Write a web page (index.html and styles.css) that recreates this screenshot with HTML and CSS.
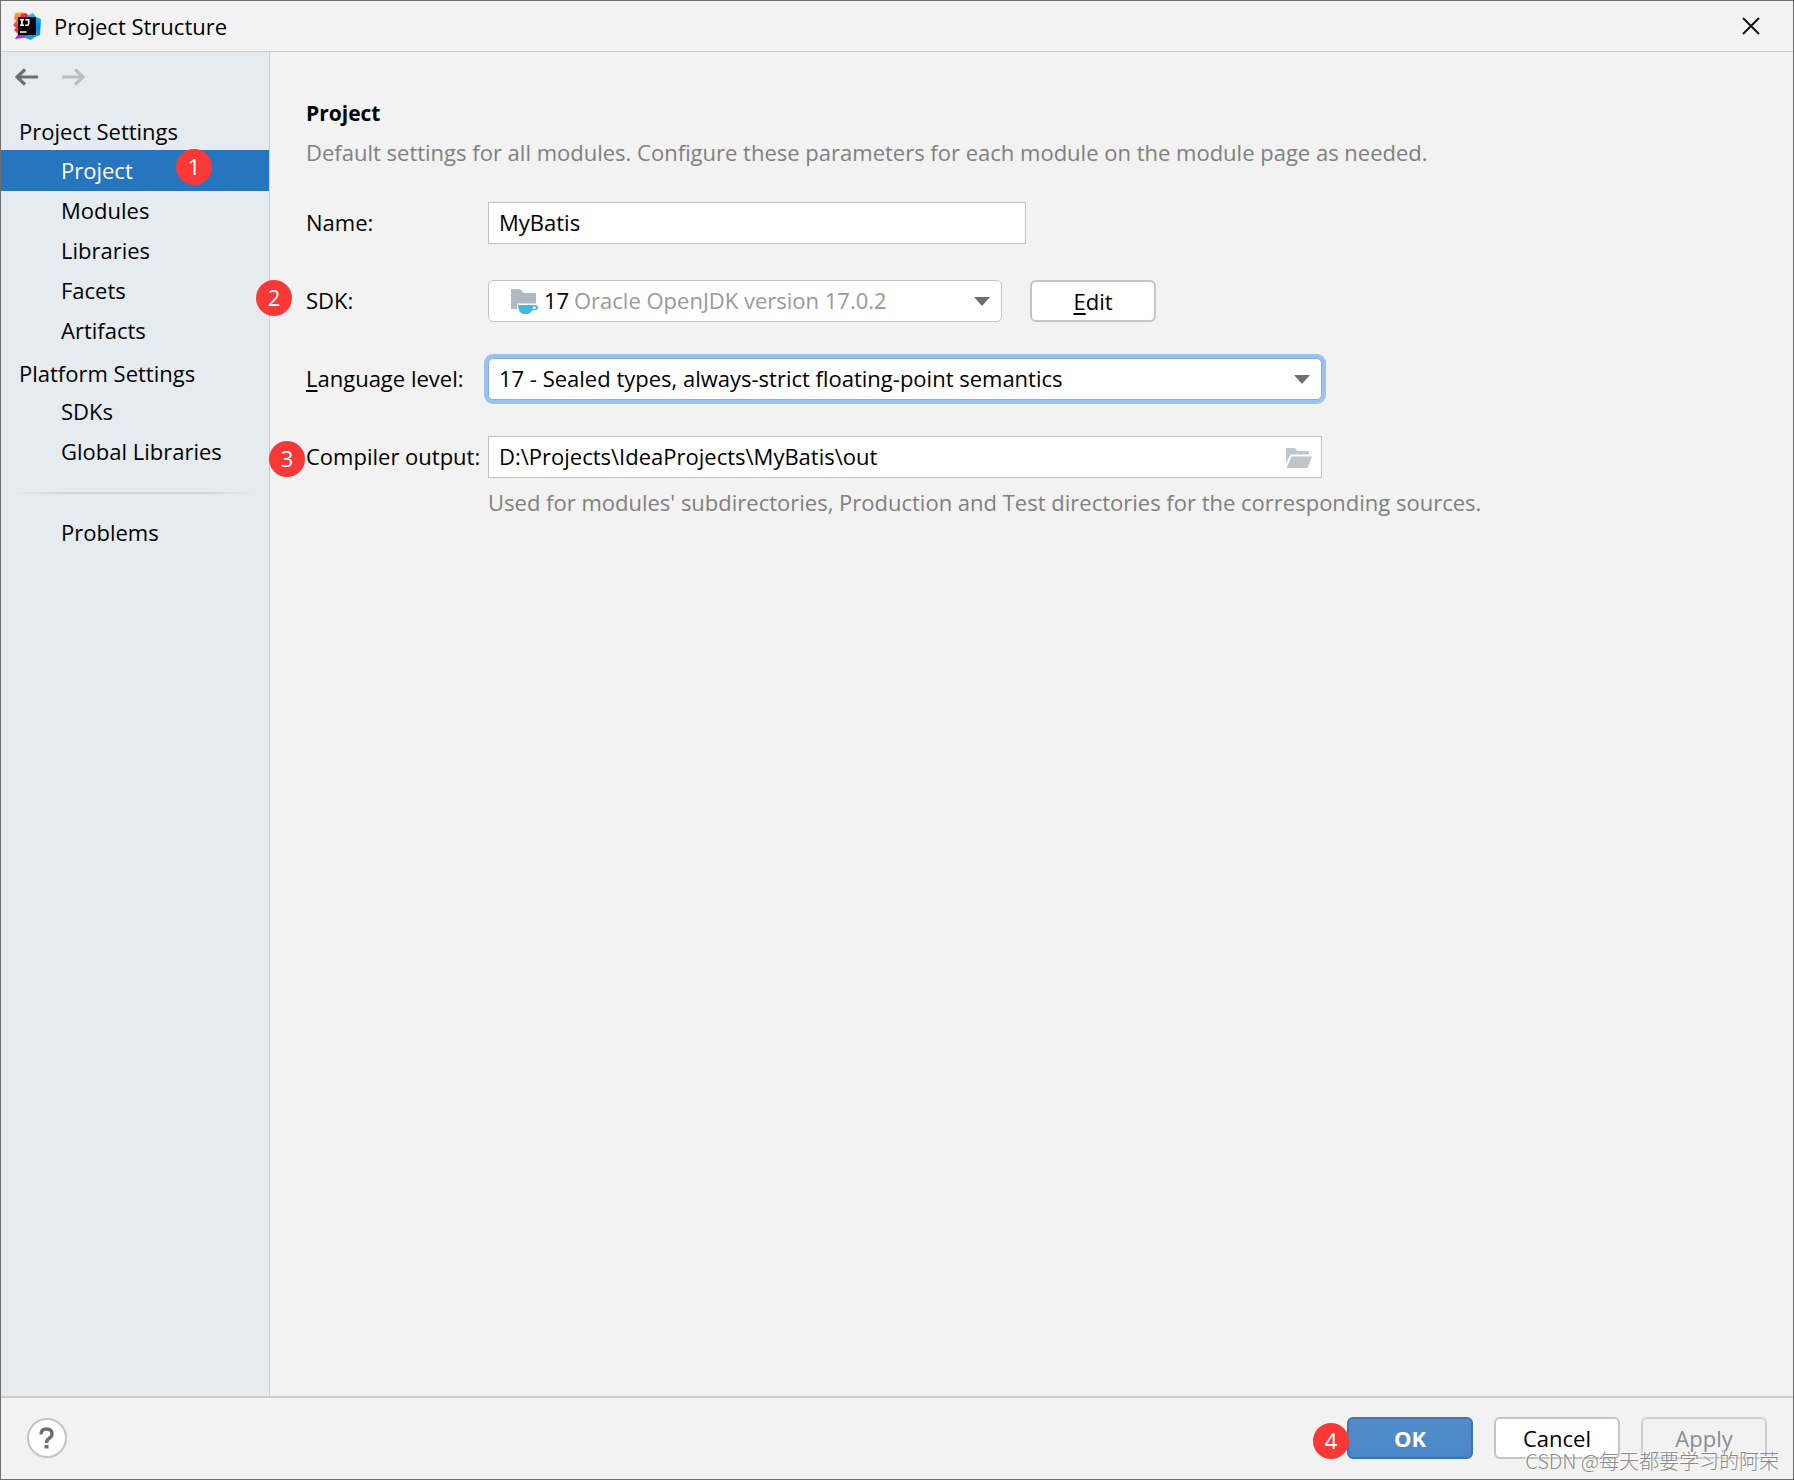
FILE: index.html
```html
<!DOCTYPE html>
<html lang="en">
<head>
<meta charset="utf-8">
<meta name="viewport" content="width=device-width, initial-scale=1">
<title>Project Structure</title>
<link rel="stylesheet" href="styles.css">
</head>
<body>
<div class="window">
  <header class="titlebar">
    <svg class="app-logo" viewBox="0 0 28 28" aria-hidden="true">
      <defs>
        <linearGradient id="warm" x1="0" y1="0" x2="0" y2="1">
          <stop offset="0" stop-color="#fdb732"/><stop offset=".4" stop-color="#fe5a3c"/><stop offset=".6" stop-color="#fe2857"/><stop offset="1" stop-color="#f92fb4"/>
        </linearGradient>
        <linearGradient id="cool" x1="0" y1="0" x2="0" y2="1">
          <stop offset="0" stop-color="#12d0f6"/><stop offset=".5" stop-color="#0a7ff0"/><stop offset="1" stop-color="#10a4f8"/>
        </linearGradient>
      </defs>
      <path fill="url(#warm)" d="M2 1 9 0l5 2 2 6-4 16-10 3 3-5-4-4 2-2-3-3 3-4-2-3z"/>
      <path fill="#fe2166" d="m8 2 5-1 4 4-4 4-6-1z"/>
      <path fill="url(#cool)" d="m16 3 4-2 3 4 5 2-1 16-5 2-4 3-6-2-4-1 4-18z"/>
      <path fill="#b32fd0" d="m6 22 9 1-5 3-8 1z"/>
      <path fill="#080305" d="M5 5h18v18H5z"/>
      <path fill="none" stroke="#fff" stroke-width="1.6" d="M7 7.8h4M9 7.8v5.4M7 13.2h4M12.300 7.800h3.400v4q0 1.500-1.500 1.500h-1.900M7 20h6.500"/>
    </svg>
    <h1 class="title">Project Structure</h1>
    <button class="close" type="button" aria-label="Close">
      <svg viewBox="0 0 18 18" width="18" height="18" aria-hidden="true"><path fill="none" stroke="#111" stroke-width="1.900" d="m1 1 16 16M17 1 1 17"/></svg>
    </button>
  </header>

  <div class="body">
    <aside class="sidebar">
      <div class="history">
        <button class="history-btn" type="button" aria-label="Back">
          <svg viewBox="0 0 24 18" width="24" height="18" aria-hidden="true"><path fill="none" stroke="#6e6e6e" stroke-width="3.200" d="M23 9H2M10 1.500 2 9l8 7.500"/></svg>
        </button>
        <button class="history-btn" type="button" aria-label="Forward" disabled>
          <svg viewBox="0 0 24 18" width="24" height="18" aria-hidden="true"><path fill="none" stroke="#bcbcbc" stroke-width="3.200" d="M0 9h21M13 1.500 21 9l-8 7.500"/></svg>
        </button>
      </div>
      <nav class="nav">
        <h2 class="group">Project Settings</h2>
        <a class="item selected" href="#project" aria-current="page">Project<span class="badge badge-nav">1</span></a>
        <a class="item" href="#modules">Modules</a>
        <a class="item" href="#libraries">Libraries</a>
        <a class="item" href="#facets">Facets</a>
        <a class="item" href="#artifacts">Artifacts</a>
        <h2 class="group">Platform Settings</h2>
        <a class="item" href="#sdks">SDKs</a>
        <a class="item" href="#global">Global Libraries</a>
        <hr class="divider">
        <a class="item" href="#problems">Problems</a>
      </nav>
    </aside>

    <main class="content" id="project">
      <h2 class="heading">Project</h2>
      <p class="muted">Default settings for all modules. Configure these parameters for each module on the module page as needed.</p>
      <form class="form">
        <div class="row">
          <label class="label" for="name">Name:</label>
          <input class="field name" id="name" type="text" value="MyBatis">
        </div>
        <div class="row">
          <span class="badge badge-sdk">2</span>
          <label class="label" for="sdk">SDK:</label>
          <div class="combo sdk">
            <select class="field select sdk-select" id="sdk"><option>Oracle OpenJDK version 17.0.2</option></select>
            <span class="sdk-tag">
              <svg viewBox="0 0 27 26" width="27" height="26" aria-hidden="true"><path fill="#aeb9c0" d="M0 2h9l4 4h12v10.500H6V22H0z"/><path fill="#40b6e0" fill-rule="evenodd" d="M7 18h15q5-.5 5 2.600 0 3.200-6 3-1 2.400-4 3.400h-5q-5-1.800-5-9zm15 1.600-.4 2.400q3.400.3 3.400-1.200 0-1.300-3-1.200z"/></svg>
              17
            </span>
            <svg class="arrow" viewBox="0 0 16 9" aria-hidden="true"><path fill="#6e6e6e" d="M0 0h16L8 9z"/></svg>
          </div>
          <button class="btn edit" type="button"><u>E</u>dit</button>
        </div>
        <div class="row">
          <label class="label" for="level"><u>L</u>anguage level:</label>
          <div class="combo wide">
            <select class="field select focused" id="level"><option>17 - Sealed types, always-strict floating-point semantics</option></select>
            <svg class="arrow" viewBox="0 0 16 9" aria-hidden="true"><path fill="#6e6e6e" d="M0 0h16L8 9z"/></svg>
          </div>
        </div>
        <div class="row">
          <span class="badge badge-output">3</span>
          <label class="label" for="output">Compiler output:</label>
          <div class="combo wide">
            <input class="field output" id="output" type="text" value="D:\Projects\IdeaProjects\MyBatis\out">
            <button class="browse" type="button" aria-label="Browse">
              <svg viewBox="0 0 26 20" width="26" height="20" aria-hidden="true"><path fill="#bfc5c9" d="M0 0h9l2 3h12v3.500H4.500L0 15zM5.500 8.500H26L21.500 20H.5z"/></svg>
            </button>
          </div>
        </div>
        <p class="muted hint">Used for modules' subdirectories, Production and Test directories for the corresponding sources.</p>
      </form>
    </main>
  </div>

  <footer class="footer">
    <button class="help" type="button" aria-label="Help">
      <svg viewBox="0 0 16 22" width="16" height="22" aria-hidden="true"><path fill="none" stroke="#6e6e6e" stroke-width="3.400" d="M2 7.500Q2 2 7.500 2T13 7q0 2.500-3 4.500-2.500 1.700-2.500 4.500"/><path fill="#6e6e6e" d="M5.500 18h4v3.500h-4z"/></svg>
    </button>
    <div class="actions">
      <button class="btn primary" type="submit">OK<span class="badge badge-ok">4</span></button>
      <button class="btn" type="button">Cancel</button>
      <button class="btn" type="button" disabled>Apply</button>
    </div>
    <span class="watermark">CSDN @每天都要学习的阿荣</span>
  </footer>
</div>
</body>
</html>
```
FILE: styles.css
```css
* { box-sizing: border-box; }

body {
  margin: 0;
  font: 22px/28px "Open Sans", "Noto Sans", "Noto Sans CJK SC", sans-serif;
  color: #000;
  background: #f2f2f2;
}

button, input, select { font: inherit; color: inherit; }
button { padding: 0; }
h1, h2, p { margin: 0; font-size: inherit; font-weight: 400; }
svg { display: block; }
u { text-decoration-thickness: 2px; text-underline-offset: 3px; text-decoration-skip-ink: none; }

.window {
  min-height: 100vh;
  display: flex;
  flex-direction: column;
  border: 1px solid #6e6e6e;
}

.titlebar {
  display: flex;
  align-items: center;
  height: 51px;
  padding: 0 33px 0 12px;
  border-bottom: 1px solid #cdcdcd;
}
.app-logo { width: 28px; height: 28px; }
.title { flex: 1; margin-left: 13px; }
.close { border: 0; background: none; }

.body { flex: 1; display: flex; }

.sidebar {
  flex: none;
  width: 269px;
  background: #e6ebf0;
  border-right: 1px solid #cdcdcd;
}
.history { display: flex; gap: 23px; padding: 16px 14px 0; }
.history-btn { border: 0; background: none; }
.nav { padding-top: 23px; }
.group { height: 41px; padding: 8px 18px 0; }
.item {
  position: relative;
  display: flex;
  align-items: center;
  height: 40px;
  padding: 0 0 2px 60px;
  color: #000;
  text-decoration: none;
}
.selected { height: 41px; background: #2675bf; color: #fff; }
.divider {
  height: 2px;
  margin: 20px 12px 19px;
  border: 0;
  background: linear-gradient(to right, transparent, #d5d5d5 20%, #d5d5d5 80%, transparent);
}

.content { flex: 1; padding: 47px 36px; }
.heading { font-size: 21px; font-weight: 700; }
.muted { color: #808080; }
.heading + .muted { margin-top: 11px; }

.form { margin-top: 36px; }
.row { position: relative; display: flex; align-items: center; margin-bottom: 36px; }
.label { width: 182px; padding-bottom: 2px; white-space: nowrap; }
.field {
  width: 100%;
  height: 42px;
  padding: 0 10px 2px;
  border: 1px solid #c4c4c4;
  border-radius: 0;
  background: #fff;
  outline: 0;
}
.name { width: 538px; }
.combo { position: relative; }
.sdk { width: 514px; margin-right: 28px; }
.wide { width: 834px; }
.select { appearance: none; border-radius: 5px; }
.sdk-select { padding-left: 85px; color: #999; }
.sdk-tag {
  position: absolute;
  left: 23px;
  top: 0;
  height: 40px;
  display: flex;
  align-items: center;
  gap: 6px;
  pointer-events: none;
}
.sdk-tag svg { overflow: visible; }
.arrow { position: absolute; right: 12px; top: 17px; width: 16px; height: 9px; pointer-events: none; }
.focused { border-color: #87afda; box-shadow: 0 0 0 4px #97c3f3; }
.output { padding-right: 46px; }
.browse { position: absolute; right: 10px; top: 12px; border: 0; background: none; }
.hint { margin: -26px 0 0 182px; }

.btn {
  position: relative;
  width: 126px;
  height: 42px;
  border: 2px solid #c4c4c4;
  border-radius: 6px;
  background: #fff;
}
.btn:disabled { border-color: #cfcfcf; background: transparent; color: #8c8c8c; }
.primary { border-color: #3d75b3; background: linear-gradient(#528cc9, #4a87c8); color: #fff; font-weight: 700; }

.footer {
  position: relative;
  display: flex;
  align-items: center;
  justify-content: space-between;
  height: 83px;
  padding: 0 26px 1px;
  border-top: 2px solid #cdcdcd;
}
.help {
  display: grid;
  place-items: center;
  width: 40px;
  height: 40px;
  border: 2px solid #c4c4c4;
  border-radius: 50%;
  background: #fff;
}
.actions { display: flex; gap: 21px; }

.badge {
  position: absolute;
  width: 36px;
  height: 36px;
  border-radius: 50%;
  background: #fb3838;
  color: #fff;
  font-weight: 400;
  line-height: 34px;
  text-align: center;
}
.badge-nav { left: 175px; top: -1px; }
.badge-sdk { left: -50px; top: 0; }
.badge-output { left: -37px; top: 5px; }
.badge-ok { left: -36px; top: 4px; }

.watermark {
  position: absolute;
  right: 14px;
  bottom: 4px;
  font: 300 20px/28px "Noto Sans CJK SC", sans-serif;
  color: #8a8a8a;
  text-shadow: -1px -1px 0 #fff;
  pointer-events: none;
}
```
